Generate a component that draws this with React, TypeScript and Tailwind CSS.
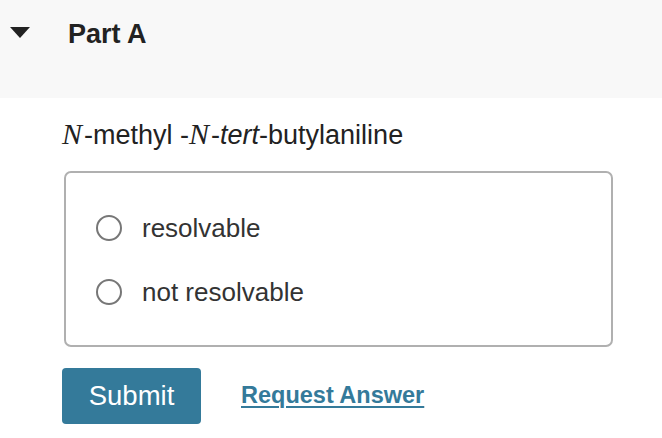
export default function App() {
  return (
    <div className="w-[662px] h-[438px] bg-white text-[#333] font-['Liberation_Sans',Arial,sans-serif] overflow-hidden">
      <div className="h-[98px] bg-[#f8f8f8] flex items-start pt-[18px]">
        <div className="w-[68px] flex pl-[10px] pt-[9px]">
          <svg width="20" height="11" viewBox="0 0 20 11">
            <polygon points="0,0 20,0 10,11" fill="#222" />
          </svg>
        </div>
        <h2 className="text-[27px] font-bold text-[#222] leading-[32px]">Part A</h2>
      </div>
      <div className="pl-[62px] pr-[50px]">
        <p className="text-[27px] leading-[32px] mt-[20px] text-[#222]">
          <span className="font-['Liberation_Serif',serif] italic text-[30px] mr-[2px]">N</span>-methyl -
          <span className="font-['Liberation_Serif',serif] italic text-[30px] mr-[2px]">N</span>-<i>tert</i>-butylaniline
        </p>
        <div className="mt-[20px] w-[549px] h-[176px] ml-[2px] border-2 border-[#b0b0b0] rounded-[7px] pl-[30px] pt-[39px] flex flex-col gap-[32px]">
          {["resolvable", "not resolvable"].map((label) => (
            <label key={label} className="flex items-center gap-[20px] h-[32px]">
              <span className="w-[26px] h-[26px] rounded-full border-2 border-[#777] bg-white" />
              <span className="text-[26px] text-[#333]">{label}</span>
            </label>
          ))}
        </div>
        <div className="mt-[21px] flex items-center gap-[40px]">
          <button className="w-[139px] h-[56px] bg-[#347a9a] rounded-[4px] text-white text-[27.5px]">Submit</button>
          <a className="text-[23.5px] font-bold text-[#347a9a] underline underline-offset-[3px] decoration-2">Request Answer</a>
        </div>
      </div>
    </div>
  );
}
